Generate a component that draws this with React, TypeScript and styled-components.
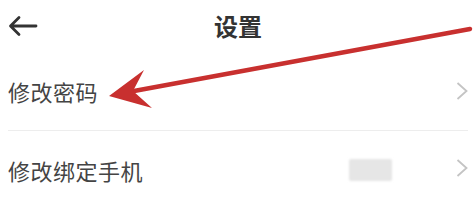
import styled, { createGlobalStyle } from "styled-components";

const GlobalStyle = createGlobalStyle`
  html, body {
    margin: 0;
    padding: 0;
    background: #ffffff;
    font-family: "Noto Sans CJK SC", "Noto Sans", sans-serif;
    overflow: hidden;
  }
`;

const Page = styled.div`
  position: relative;
  width: 476px;
  height: 203px;
  overflow: hidden;
  background: #fff;
`;

const Header = styled.div`
  position: relative;
  display: flex;
  align-items: center;
  justify-content: center;
  height: 52px;
`;

const BackButton = styled.div`
  position: absolute;
  left: 8px;
  top: 15px;
  width: 30px;
  height: 22px;
  display: flex;
  align-items: center;
`;

const Title = styled.h1`
  margin: 0;
  font-size: 24px;
  font-weight: 700;
  color: #333;
  line-height: 1;
`;

const List = styled.div`
  display: flex;
  flex-direction: column;
  padding: 0 8px;
`;

const Row = styled.div<{ $divider?: boolean }>`
  display: flex;
  align-items: center;
  height: 78px;
  border-bottom: ${(p) => (p.$divider ? "1px solid #ededed" : "none")};
`;

const Label = styled.span`
  flex: 1;
  font-size: 22px;
  color: #444;
  letter-spacing: 0.5px;
`;

const Masked = styled.div`
  width: 43px;
  height: 22px;
  margin-right: 64px;
  background: #e6e6e6;
  border-radius: 2px;
  filter: blur(1.2px);
`;

const Chevron = styled.svg<{ $lift?: number }>`
  width: 12px;
  height: 18px;
  margin-right: 0;
  margin-bottom: ${(p) => p.$lift ?? 0}px;
`;

const Annotation = styled.svg`
  position: absolute;
  left: 0;
  top: 0;
  pointer-events: none;
`;

const ChevronIcon = ({ lift }: { lift?: number }) => (
  <Chevron viewBox="0 0 12 18" $lift={lift}>
    <path d="M1.5 1 L10.5 9 L1.5 17" fill="none" stroke="#c4c4c4" strokeWidth="1.8" />
  </Chevron>
);

export default function App() {
  return (
    <Page>
      <GlobalStyle />
      <Header>
        <BackButton>
          <svg width="30" height="22" viewBox="0 0 30 22">
            <path
              d="M28 11 H3 M11 2.5 L2.5 11 L11 19.5"
              fill="none"
              stroke="#333"
              strokeWidth="2.8"
              strokeLinecap="round"
              strokeLinejoin="round"
            />
          </svg>
        </BackButton>
        <Title>设置</Title>
      </Header>
      <List>
        <Row $divider>
          <Label>修改密码</Label>
          <ChevronIcon />
        </Row>
        <Row>
          <Label>修改绑定手机</Label>
          <Masked />
          <ChevronIcon lift={4} />
        </Row>
      </List>
      <Annotation width="476" height="203" viewBox="0 0 476 203">
        <line x1="470" y1="29" x2="134" y2="91" stroke="#c8302f" strokeWidth="4.5" strokeLinecap="round" />
        <polygon points="109,96 144,70 133,91 152,108" fill="#c8302f" />
      </Annotation>
    </Page>
  );
}
